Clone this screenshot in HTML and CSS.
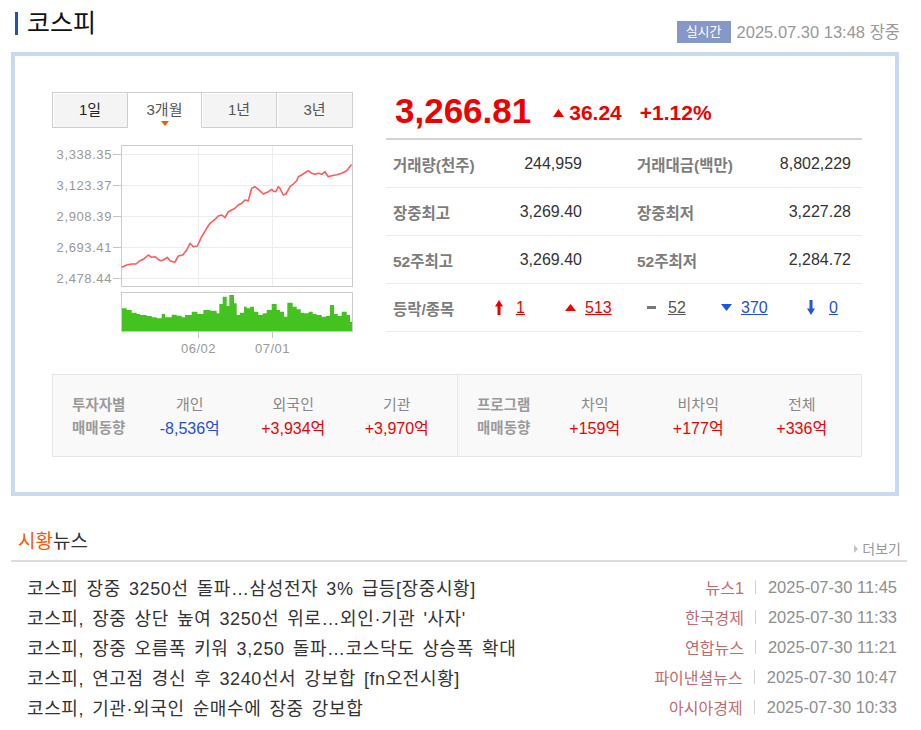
FILE: index.html
```html
<!DOCTYPE html>
<html lang="ko">
<head>
<meta charset="utf-8">
<title>코스피</title>
<link rel="stylesheet" href="styles.css">
</head>
<body>
<div class="page">
  <header class="head">
    <h1 class="title">코스피</h1>
    <div class="stamp"><span class="badge">실시간</span><span class="time">2025.07.30 13:48 장중</span></div>
  </header>

  <section class="box">
    <div class="top">
      <div class="chart-panel">
        <ul class="tabs">
          <li class="tab first">1일</li>
          <li class="tab on">3개월</li>
          <li class="tab">1년</li>
          <li class="tab">3년</li>
        </ul>
        <svg class="chart" width="301" height="227" viewBox="0 0 301 227">
          <g class="grid">
            <line x1="70" y1="26.5" x2="300" y2="26.5"/>
            <line x1="70" y1="57.5" x2="300" y2="57.5"/>
            <line x1="70" y1="88.5" x2="300" y2="88.5"/>
            <line x1="70" y1="119.5" x2="300" y2="119.5"/>
            <line x1="70" y1="150.5" x2="300" y2="150.5"/>
            <line x1="146.5" y1="18" x2="146.5" y2="158"/>
            <line x1="220.5" y1="18" x2="220.5" y2="158"/>
          </g>
          <g class="ticks">
            <line x1="61" y1="26.5" x2="69.5" y2="26.5"/>
            <line x1="61" y1="57.5" x2="69.5" y2="57.5"/>
            <line x1="61" y1="88.5" x2="69.5" y2="88.5"/>
            <line x1="61" y1="119.5" x2="69.5" y2="119.5"/>
            <line x1="61" y1="150.5" x2="69.5" y2="150.5"/>
            <line x1="146.5" y1="204" x2="146.5" y2="210"/>
            <line x1="220.5" y1="204" x2="220.5" y2="210"/>
          </g>
          <rect class="frame" x="69.5" y="17.5" width="231" height="141"/>
          <path class="vol" d="M70,203 V180.3 H74.7 V182 H79.7 V184.7 H84.7 V186 H88 V187 H94.7 V188 H99.7 V189.3 H104.7 V190.3 H109.7 V186 H113 V189.3 H119.7 V186.7 H124.7 V187.7 H129.7 V189.3 H133 V187 H139.7 V183.7 H145.3 V186 H151.3 V182 H158 V182.7 H164.7 V185.3 H167.3 V176 H170.7 V168.7 H174.7 V178 H177.3 V167 H182 V175.3 H184.7 V187 H188 V184.7 H192 V178.7 H194.7 V180.3 H198 V178.7 H202 V183.7 H206.3 V187 H210.7 V185.3 H214.7 V182 H219.7 V176 H224.7 V182 H228 V183.7 H232 V188.7 H235.3 V174.7 H240.7 V178.7 H244.7 V181.3 H248.7 V184.7 H252 V185.3 H256.7 V183.7 H260.7 V186 H264.7 V187 H269.7 V188.7 H274 V188 H278 V177 H282 V186 H285.7 V188 H289.7 V183.7 H294.7 V187 H298 V193.7 H300 V203 Z"/>
          <rect class="frame" x="69.5" y="164.5" width="231" height="39"/>
          <polyline class="line" points="69.7,139.3 74.7,137 79.7,136 84,136 88,132.7 91.3,131.3 96.3,127 99.7,129.3 103,128.7 108,132.7 111.3,132 115.3,129.3 118,132.7 121.3,134 123,134 126.3,128 130.7,127 134.7,122 138,115.3 141.3,118.7 145.3,118 149.7,108.7 154.7,100.3 158,95.3 163,91.3 166.3,88 169.7,87 173,89.7 176.3,83.7 179.7,82 183,80.3 186.3,77 189.7,75.3 193,72 196.3,72.7 199.7,60.3 203,58.7 206.3,61.3 211.3,66 216.3,63.7 219.7,61.3 221.3,63 223.7,63.7 226.3,58.7 228,60.3 231.3,67 234,66 238,58.7 241.3,56 244.7,52.7 246.3,48.7 249.7,47 253,44.7 256.3,42.7 259.7,45.3 263,46.3 266.3,45.3 269.7,46.3 273,43.7 276.3,48.7 279.7,47.7 284.7,46.7 289.7,45.3 294.7,42.7 299.5,36.5"/>
          <g class="ylab">
            <text x="60" y="30.5">3,338.35</text>
            <text x="60" y="61.5">3,123.37</text>
            <text x="60" y="92.5">2,908.39</text>
            <text x="60" y="123.5">2,693.41</text>
            <text x="60" y="154.5">2,478.44</text>
          </g>
          <g class="xlab">
            <text x="146.5" y="224.5">06/02</text>
            <text x="220.5" y="224.5">07/01</text>
          </g>
        </svg>
      </div>

      <div class="info">
        <div class="price">
          <span class="now">3,266.81</span><svg class="tri-up" width="11" height="8" viewBox="0 0 11 8"><path d="M5.5 0 L11 8 H0 Z"/></svg><span class="chg">36.24</span><span class="chg pct">+1.12%</span>
        </div>
        <div class="row">
          <span class="lab c1">거래량(천주)</span><span class="val c2">244,959</span>
          <span class="lab c3">거래대금(백만)</span><span class="val c4">8,802,229</span>
        </div>
        <div class="row">
          <span class="lab c1">장중최고</span><span class="val c2">3,269.40</span>
          <span class="lab c3">장중최저</span><span class="val c4">3,227.28</span>
        </div>
        <div class="row">
          <span class="lab c1">52주최고</span><span class="val c2">3,269.40</span>
          <span class="lab c3">52주최저</span><span class="val c4">2,284.72</span>
        </div>
        <div class="row">
          <span class="lab f0">등락/종목</span>
          <span class="fi f1"><svg class="ic-arrow" width="8" height="15" viewBox="0 0 8 15"><path class="red" d="M4 0 L8 6.5 H5.5 V15 H2.5 V6.5 H0 Z"/></svg><a class="num red-t">1</a></span>
          <span class="fi f2"><svg class="ic-tri" width="11" height="7" viewBox="0 0 11 7"><path class="red" d="M5.5 0 L11 7 H0 Z"/></svg><a class="num red-t">513</a></span>
          <span class="fi f3"><svg class="ic-dash" width="9" height="3" viewBox="0 0 9 3"><rect class="gray" width="9" height="3"/></svg><a class="num gray-t">52</a></span>
          <span class="fi f4"><svg class="ic-tri" width="11" height="7" viewBox="0 0 11 7"><path class="blue" d="M0 0 H11 L5.5 7 Z"/></svg><a class="num blue-t">370</a></span>
          <span class="fi f5"><svg class="ic-arrow dn" width="8" height="15" viewBox="0 0 8 15"><path class="blue" d="M2.5 0 H5.5 V8.5 H8 L4 15 L0 8.5 H2.5 Z"/></svg><a class="num blue-t">0</a></span>
        </div>
      </div>
    </div>

    <div class="investor">
      <div class="half">
        <div class="inv-lab">투자자별<br>매매동향</div>
        <div class="col"><div class="t">개인</div><div class="v blue-t">-8,536억</div></div>
        <div class="col"><div class="t">외국인</div><div class="v red-t">+3,934억</div></div>
        <div class="col"><div class="t">기관</div><div class="v red-t">+3,970억</div></div>
      </div>
      <div class="half">
        <div class="inv-lab">프로그램<br>매매동향</div>
        <div class="col"><div class="t">차익</div><div class="v red-t">+159억</div></div>
        <div class="col"><div class="t">비차익</div><div class="v red-t">+177억</div></div>
        <div class="col"><div class="t">전체</div><div class="v red-t">+336억</div></div>
      </div>
    </div>
  </section>

  <section class="news">
    <div class="news-head">
      <h2 class="news-title"><span class="hl">시황</span>뉴스</h2>
      <a class="more">더보기</a>
    </div>
    <ul class="news-list">
      <li><span class="nt">코스피 장중 3250선 돌파…삼성전자 3% 급등[장중시황]</span><span class="src">뉴스1</span><span class="sep"></span><span class="dt">2025-07-30 11:45</span></li>
      <li><span class="nt">코스피, 장중 상단 높여 3250선 위로…외인·기관 '사자'</span><span class="src">한국경제</span><span class="sep"></span><span class="dt">2025-07-30 11:33</span></li>
      <li><span class="nt">코스피, 장중 오름폭 키워 3,250 돌파…코스닥도 상승폭 확대</span><span class="src">연합뉴스</span><span class="sep"></span><span class="dt">2025-07-30 11:21</span></li>
      <li><span class="nt">코스피, 연고점 경신 후 3240선서 강보합 [fn오전시황]</span><span class="src">파이낸셜뉴스</span><span class="sep"></span><span class="dt">2025-07-30 10:47</span></li>
      <li><span class="nt">코스피, 기관·외국인 순매수에 장중 강보합</span><span class="src">아시아경제</span><span class="sep"></span><span class="dt">2025-07-30 10:33</span></li>
    </ul>
  </section>
</div>
</body>
</html>
```

FILE: styles.css
```css
* { box-sizing: border-box; }
html, body { margin: 0; padding: 0; }
body {
  background: #fff;
  color: #333;
  font-family: "Liberation Sans", "Noto Sans CJK KR", sans-serif;
  width: 921px;
}
ul { list-style: none; margin: 0; padding: 0; }
h1, h2 { margin: 0; font-weight: normal; }

/* header */
.head {
  height: 52px;
  display: flex;
  justify-content: space-between;
  align-items: flex-start;
  padding: 0 21px 0 15px;
}
.title {
  margin-top: 12px;
  height: 23px;
  line-height: 23px;
  border-left: 3px solid #2b50a8;
  padding-left: 9px;
  font-size: 25px;
  color: #111;
}
.stamp { margin-top: 21px; display: flex; align-items: center; }
.badge {
  width: 54px;
  height: 22px;
  line-height: 22px;
  text-align: center;
  background: #8698c8;
  color: #fff;
  font-size: 13px;
}
.time { margin-left: 6px; font-size: 16.5px; line-height: 22px; color: #999; }

/* main box */
.box {
  margin: 0 22px 0 11px;
  border: 4px solid #c9daef;
  padding: 36px 33px 35px 37px;
}
.top { display: flex; gap: 33px; }
.chart-panel { width: 301px; }

.tabs { display: grid; grid-template-columns: 76px 74px 75px 76px; height: 36px; }
.tab {
  position: relative;
  border: 1px solid #cdcdcd;
  border-left: none;
  background: #f4f4f4;
  box-shadow: inset 1px 1px 0 #fff;
  text-align: center;
  line-height: 34px;
  font-size: 15px;
  color: #555;
}
.tab.first { border-left: 1px solid #cdcdcd; color: #222; }
.tab.on { background: #fff; border-bottom-color: #fff; }
.tab.on::after {
  content: "";
  position: absolute;
  left: 50%;
  bottom: 1px;
  margin-left: -4px;
  border-left: 4px solid transparent;
  border-right: 4px solid transparent;
  border-top: 5px solid #f55a00;
}

.chart { display: block; }
.chart .grid line { stroke: #ececec; stroke-width: 1; }
.chart .ticks line { stroke: #c4c4c4; stroke-width: 1; }
.chart .frame { fill: none; stroke: #cccccc; stroke-width: 1; }
.chart .vol { fill: #44c21f; }
.chart .line { fill: none; stroke: #ff5a5a; stroke-width: 1.6; stroke-linejoin: round; }
.chart .ylab text { font-size: 13px; letter-spacing: 0.6px; fill: #999; text-anchor: end; font-family: "Liberation Sans", sans-serif; }
.chart .xlab text { font-size: 13px; letter-spacing: 0.5px; fill: #999; text-anchor: middle; font-family: "Liberation Sans", sans-serif; }

/* info table */
.info { width: 476px; }
.price {
  height: 48px;
  border-bottom: 2px solid #d2d2d2;
  padding-left: 9px;
  line-height: 38px;
  font-size: 35px;
  white-space: nowrap;
}
.now { font-size: 35px; font-weight: bold; color: #e00; }
.tri-up { fill: #e00; margin-left: 22px; vertical-align: 6px; }
.chg { font-size: 21px; font-weight: bold; color: #e00; vertical-align: 3px; margin-left: 5px; }
.chg.pct { margin-left: 18px; }

.row {
  display: flex;
  align-items: center;
  height: 48px;
  border-bottom: 1px solid #ebebeb;
  padding: 0 11px 0 7px;
  font-size: 16px;
}
.lab { font-size: 15.5px; font-weight: bold; color: #7d7d7d; }
.val { color: #333; text-align: right; }
.c1 { width: 100px; }
.c2 { width: 89px; }
.c3 { width: 120px; margin-left: 55px; }
.c4 { width: 94px; }

.f0 { width: 102px; }
.fi { display: flex; align-items: center; }
.f1 { width: 70px; }
.f2 { width: 82px; }
.f3 { width: 74px; }
.f4 { width: 86px; }
.num { text-decoration: underline; font-size: 16px; }
.f1 .num { margin-left: 13px; }
.f2 .num { margin-left: 9px; }
.f3 .num { margin-left: 12px; }
.f4 .num { margin-left: 9px; }
.f5 .num { margin-left: 14px; }
.red { fill: #e00; }
.blue { fill: #1f57d8; }
.gray { fill: #777; }
.red-t { color: #e00; }
.blue-t { color: #1f4fd8; }
.gray-t { color: #555; }

/* investor box */
.investor {
  margin-top: 19px;
  display: grid;
  grid-template-columns: 404px 1fr;
  height: 83px;
  border: 1px solid #e6e6e6;
  background: #f9f9f9;
}
.half {
  display: grid;
  grid-template-columns: 85px repeat(3, 103.5px);
  padding-top: 18px;
}
.half + .half { border-left: 1px solid #e6e6e6; }
.inv-lab {
  padding-left: 19px;
  padding-top: 1px;
  font-size: 14.5px;
  font-weight: bold;
  line-height: 23px;
  color: #9a9a9a;
}
.col { text-align: center; }
.col .t { font-size: 15px; line-height: 24px; color: #888; }
.col .v { font-size: 16px; line-height: 24px; }

/* news */
.news { margin: 30px 14px 0 11px; }
.news-head {
  display: flex;
  justify-content: space-between;
  align-items: flex-end;
  height: 36px;
  border-bottom: 2px solid #dcdcdc;
  padding: 0 6px 0 7px;
}
.news-title { font-size: 19px; line-height: 36px; color: #333; }
.news-title .hl { color: #ff5500; }
.more { font-size: 14px; line-height: 22px; color: #999; display: flex; align-items: center; }
.more::before {
  content: "";
  border-top: 4px solid transparent;
  border-bottom: 4px solid transparent;
  border-left: 4px solid #c2c2c2;
  margin-right: 4px;
}
.news-list { padding-top: 10px; }
.news-list li {
  display: flex;
  align-items: center;
  height: 30px;
  padding: 0 10px 0 16px;
  white-space: nowrap;
}
.nt { flex: 1; font-size: 18px; letter-spacing: 0.6px; word-spacing: 2.5px; color: #333; }
.src { font-size: 16px; color: #c46a6e; }
.sep { width: 1px; height: 14px; background: #d5d5d5; margin: 0 12px 0 11px; }
.dt { font-size: 16.5px; color: #8f8f8f; }
```
